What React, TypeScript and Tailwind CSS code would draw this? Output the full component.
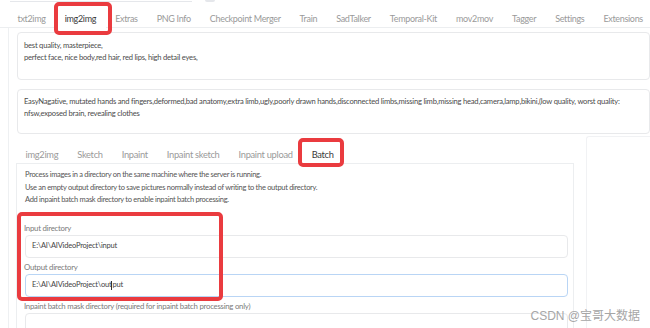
import React from "react";

const mainTabs = [
  "txt2img",
  "img2img",
  "Extras",
  "PNG Info",
  "Checkpoint Merger",
  "Train",
  "SadTalker",
  "Temporal-Kit",
  "mov2mov",
  "Tagger",
  "Settings",
  "Extensions",
];

const subTabs = ["img2img", "Sketch", "Inpaint", "Inpaint sketch", "Inpaint upload", "Batch"];

function Mark({ className }: { className: string }) {
  // red annotation frame drawn over the screenshot
  return (
    <div
      className={`absolute border-[4px] border-[#ea3b3f] rounded-[5px] pointer-events-none ${className}`}
    />
  );
}

export default function App() {
  return (
    <div
      className="relative w-[650px] h-[328px] overflow-hidden bg-white text-[#555]"
      style={{ fontFamily: '"Lato", "Open Sans", sans-serif' }}
    >
      {/* cut-off bits of the header above */}
      <div className="flex h-[2px]">
        <div className="ml-[10px] w-[182px] border-b border-[#e5e7eb]" />
        <div className="ml-[13px] w-[10px] bg-[#e5e7eb] rounded-b" />
      </div>

      {/* main tabs */}
      <div className="flex pl-[8px] h-[26px] pt-[8px] border-b border-[#eceef0] text-[9px] tracking-[-0.32px] text-[#9a9a9a] whitespace-nowrap">
        {mainTabs.map((t) => (
          <div
            key={t}
            className={
              t === "img2img"
                ? "px-[9.5px] flex items-center bg-white text-[#3a3a3a] -mb-px"
                : "px-[9.5px] flex items-center"
            }
          >
            {t}
          </div>
        ))}
      </div>

      {/* main panel */}
      <div className="ml-[8px] border-l border-[#eef0f2] h-[300px] pl-[8px] pt-[4px]">
        <div className="h-[48px] border border-[#e8e9eb] rounded-[4px] px-[6px] pt-[7px] text-[7.6px] tracking-[-0.22px] leading-[11.5px] text-[#4b4b4b]">
          <div>best quality, masterpiece,</div>
          <div>perfect face, nice body,red hair, red lips, high detail eyes,</div>
        </div>
        <div className="mt-[9px] h-[45px] border border-[#e8e9eb] rounded-[4px] px-[6px] pt-[5px] text-[7.6px] tracking-[-0.22px] leading-[12px] text-[#4b4b4b] whitespace-nowrap overflow-hidden">
          <div>
            EasyNagative, mutated hands and fingers,deformed,bad anatomy,extra limb,ugly,poorly drawn hands,disconnected limbs,missing limb,missing head,camera,lamp,bikini,(low quality, worst quality:
          </div>
          <div>nfsw,exposed brain, revealing clothes</div>
        </div>

        <div className="flex mt-[10px] -ml-[1px]">
          {/* img2img sub area */}
          <div className="w-[558px]">
            <div className="flex h-[20px] pt-[2px] border-b border-[#eceef0] text-[9.3px] tracking-[-0.3px] text-[#9a9a9a] whitespace-nowrap">
              {subTabs.map((t) => (
                <div
                  key={t}
                  className={
                    t === "Batch"
                      ? "px-[9.5px] flex items-center bg-white text-[#3a3a3a] -mb-px"
                      : "px-[9.5px] flex items-center"
                  }
                >
                  {t}
                </div>
              ))}
            </div>
            <div className="border-l border-r border-[#eceef0] h-[200px] pl-[8px] pr-[5px] pt-[5px]">
              <div className="text-[7.5px] tracking-[-0.3px] leading-[12.5px] text-[#555] whitespace-nowrap">
                <div>Process images in a directory on the same machine where the server is running.</div>
                <div>Use an empty output directory to save pictures normally instead of writing to the output directory.</div>
                <div>Add inpaint batch mask directory to enable inpaint batch processing.</div>
              </div>

              <div className="mt-[16px] text-[7.8px] tracking-[-0.25px] text-[#7a7a7a] leading-[10px] -ml-px">Input directory</div>
              <div className="mt-[2px] h-[23px] border border-[#e8e9eb] rounded-[4px] flex items-center pl-[6px] text-[7.5px] tracking-[-0.2px] text-[#444]">
                E:\AI\AIVideoProject\input
              </div>

              <div className="mt-[4px] text-[7.8px] tracking-[-0.25px] text-[#7a7a7a] leading-[10px] -ml-px">Output directory</div>
              <div className="mt-[2px] h-[23px] border border-[#b9d5f5] rounded-[4px] flex items-center pl-[6px] text-[7.5px] tracking-[-0.2px] text-[#444]">
                <span>E:\AI\AIVideoProject\out</span>
                <span className="inline-block w-px h-[9px] bg-[#333]" />
                <span>put</span>
              </div>

              <div className="mt-[4px] text-[7.8px] tracking-[-0.25px] text-[#7a7a7a] leading-[10px] -ml-px whitespace-nowrap">
                Inpaint batch mask directory (required for inpaint batch processing only)
              </div>
              <div className="mt-[2px] h-[23px] border border-[#e8e9eb] rounded-[4px]" />
            </div>
          </div>

          {/* right-hand column */}
          <div className="ml-[12px] mt-[-8px] flex-1 border-l border-t border-[#f1f2f4] rounded-tl-[3px]" />
        </div>
      </div>

      {/* annotations */}
      <Mark className="left-[54px] top-[2px] w-[58px] h-[33px]" />
      <Mark className="left-[298px] top-[138px] w-[46px] h-[29px]" />
      <Mark className="left-[17px] top-[212px] w-[206px] h-[89px]" />

      {/* watermark */}
      <div
        className="absolute right-[10px] top-[307px] text-[12px] text-[#a6a6a6]"
        style={{ fontFamily: '"Liberation Sans", "Noto Sans CJK SC", sans-serif' }}
      >
        CSDN @宝哥大数据
      </div>
    </div>
  );
}
